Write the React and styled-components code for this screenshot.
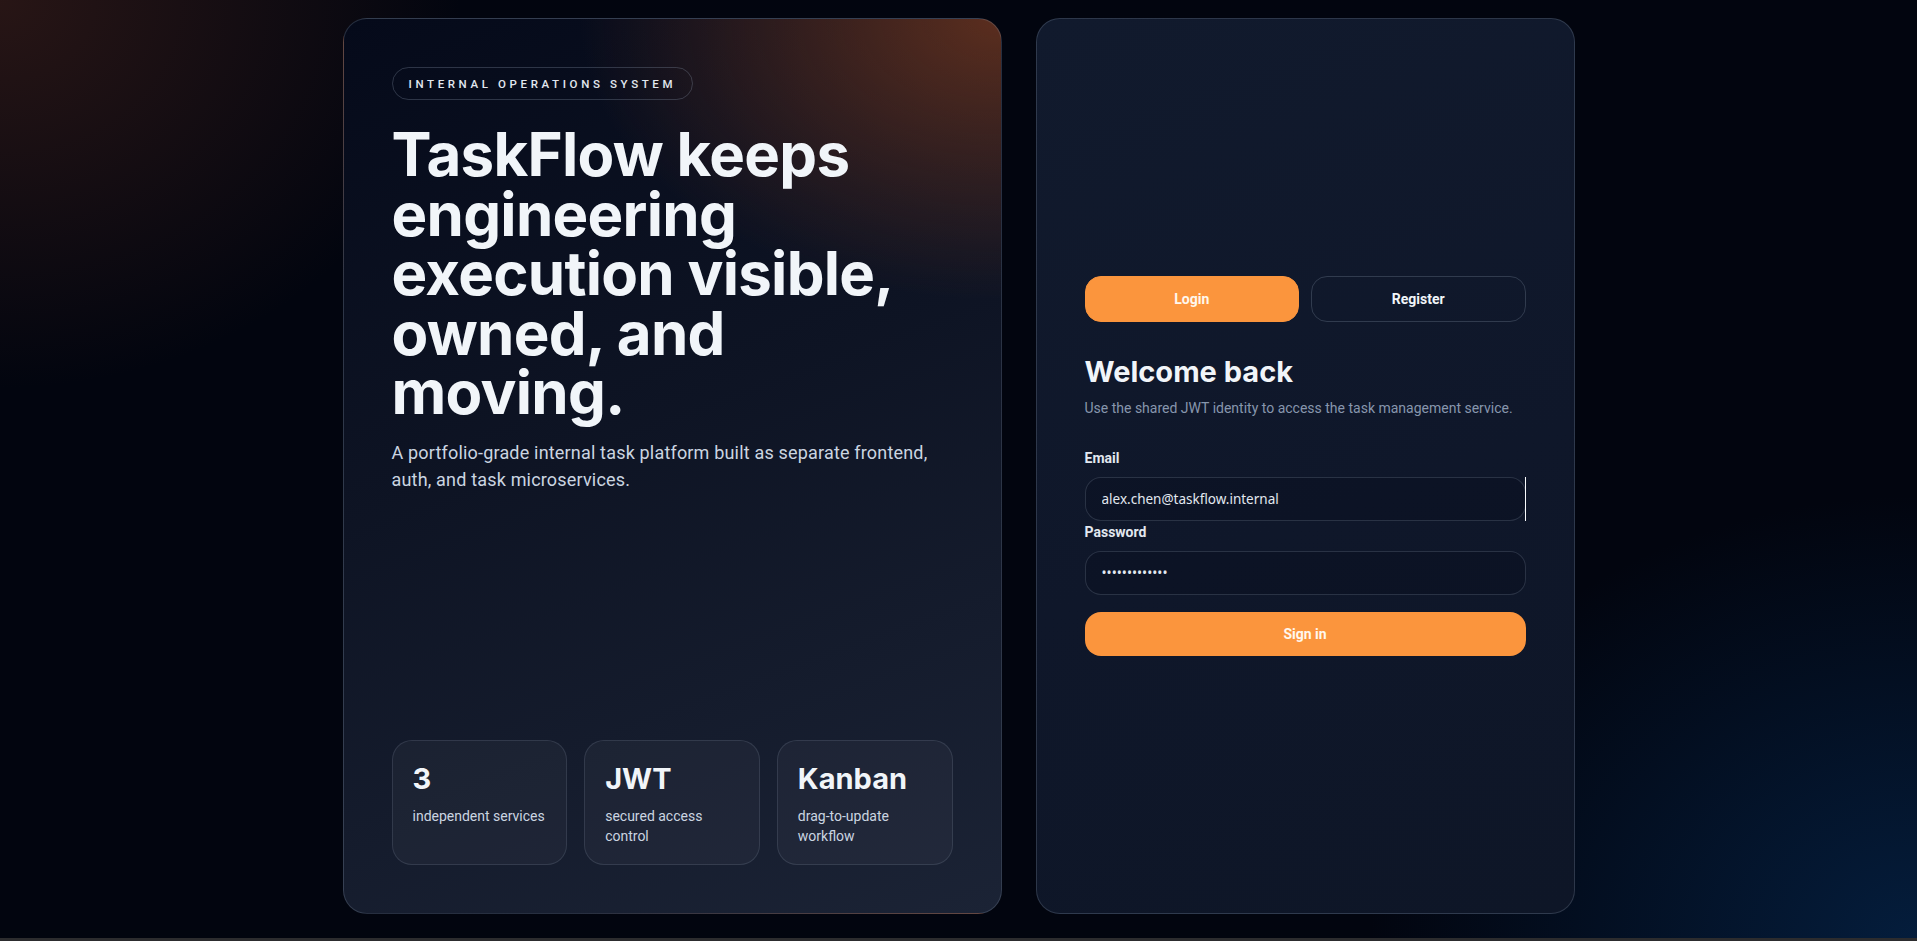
import React from "react";
import styled, { createGlobalStyle } from "styled-components";

const HEADING_FONT = `"Inter", "Liberation Sans", sans-serif`;
const BODY_FONT = `"Roboto", "Liberation Sans", sans-serif`;

const stats = [
  { value: "3", label: "independent services" },
  { value: "JWT", label: "secured access control" },
  { value: "Kanban", label: "drag-to-update workflow" },
];

const GlobalStyle = createGlobalStyle`
  * {
    box-sizing: border-box;
  }

  body {
    margin: 0;
    font-family: ${BODY_FONT};
    color: #f1f5f9;
    background:
      radial-gradient(ellipse 640px 540px at 0% 0%, rgba(92, 44, 30, 0.42), transparent 72%),
      radial-gradient(ellipse 760px 620px at 100% 100%, rgba(6, 44, 88, 0.62), transparent 72%),
      #02050f;
  }
`;

const App = () => {
  return (
    <>
      <GlobalStyle />
      <Page>
        <Shell>
          <Hero>
            <HeroTop>
              <Badge>Internal operations system</Badge>
              <Headline>TaskFlow keeps engineering execution visible, owned, and moving.</Headline>
              <Lead>
                A portfolio-grade internal task platform built as separate frontend, auth, and task
                microservices.
              </Lead>
            </HeroTop>
            <Stats>
              {stats.map((s) => (
                <StatCard key={s.value}>
                  <StatValue>{s.value}</StatValue>
                  <StatLabel>{s.label}</StatLabel>
                </StatCard>
              ))}
            </Stats>
          </Hero>

          <AuthPanel>
            <Tabs>
              <Tab active>Login</Tab>
              <Tab>Register</Tab>
            </Tabs>
            <Title>Welcome back</Title>
            <Subtitle>Use the shared JWT identity to access the task management service.</Subtitle>
            <Form onSubmit={(e) => e.preventDefault()}>
              <Label htmlFor="email">Email</Label>
              <InputWrap caret>
                <Input id="email" type="email" defaultValue="alex.chen@taskflow.internal" />
              </InputWrap>
              <Label htmlFor="password" tight>
                Password
              </Label>
              <InputWrap>
                <Input id="password" type="password" defaultValue="taskflow-2024" />
              </InputWrap>
              <Submit type="submit">Sign in</Submit>
            </Form>
          </AuthPanel>
        </Shell>
      </Page>
    </>
  );
};

const Page = styled.div`
  min-height: 100vh;
  display: flex;
  justify-content: center;
  padding: 18px 24px 24px;
  border-bottom: 4px solid #2c2c2e;
`;

const Shell = styled.div`
  width: 1232px;
  display: grid;
  grid-template-columns: 659px 1fr;
  gap: 34px;
`;

const Card = styled.section`
  min-height: 896px;
  border-radius: 24px;
  border: 1px solid rgba(148, 163, 184, 0.24);
  padding: 48px;
`;

const Hero = styled(Card)`
  display: flex;
  flex-direction: column;
  justify-content: space-between;
  background:
    radial-gradient(ellipse 540px 360px at 100% 0%, rgba(118, 56, 30, 0.75), transparent 78%),
    linear-gradient(160deg, #050a1a 0%, #0e1424 45%, #1b2335 100%);
`;

const HeroTop = styled.div`
  display: flex;
  flex-direction: column;
  align-items: flex-start;
`;

const Badge = styled.span`
  display: inline-flex;
  align-items: center;
  height: 33px;
  padding: 0 16px;
  border-radius: 999px;
  border: 1px solid rgba(148, 163, 184, 0.28);
  font-family: ${BODY_FONT};
  font-size: 11.5px;
  font-weight: 500;
  letter-spacing: 0.315em;
  text-transform: uppercase;
  color: #e2e8f0;
`;

const Headline = styled.h1`
  margin: 25px 0 0;
  font-family: ${HEADING_FONT};
  font-size: 60px;
  font-weight: 700;
  line-height: 59.6px;
  letter-spacing: -0.012em;
  color: #f1f5f9;
  max-width: 540px;
`;

const Lead = styled.p`
  margin: 16px 0 0;
  font-size: 18px;
  line-height: 27px;
  letter-spacing: 0.01em;
  color: #cbd5e1;
  max-width: 570px;
`;

const Stats = styled.div`
  display: grid;
  grid-template-columns: repeat(3, 1fr);
  gap: 17px;
`;

const StatCard = styled.div`
  height: 125px;
  padding: 22px 16px 20px 20px;
  border-radius: 20px;
  border: 1px solid rgba(148, 163, 184, 0.18);
  background: rgba(255, 255, 255, 0.035);
`;

const StatValue = styled.div`
  font-family: ${HEADING_FONT};
  font-size: 29px;
  font-weight: 700;
  line-height: 1.1;
  color: #f1f5f9;
  margin-bottom: 11px;
`;

const StatLabel = styled.div`
  font-size: 14px;
  line-height: 20px;
  color: #cbd5e1;
  max-width: 136px;
`;

const AuthPanel = styled(Card)`
  display: flex;
  flex-direction: column;
  justify-content: center;
  background: linear-gradient(160deg, #111a2d 0%, #0f172a 55%, #0e1627 100%);
`;

const Tabs = styled.div`
  display: grid;
  grid-template-columns: 1fr 1fr;
  gap: 12px;
  margin-bottom: 33px;
`;

const Tab = styled.button`
  height: 46px;
  border-radius: 16px;
  border: 1px solid ${(p) => (p.active ? "#fb953d" : "rgba(148, 163, 184, 0.25)")};
  background: ${(p) => (p.active ? "#fb953d" : "transparent")};
  color: ${(p) => (p.active ? "#fff7ed" : "#f1f5f9")};
  font-family: ${BODY_FONT};
  font-size: 14px;
  font-weight: 700;
  cursor: pointer;
`;

const Title = styled.h2`
  margin: 0;
  font-family: ${HEADING_FONT};
  font-size: 29px;
  font-weight: 700;
  line-height: 1.2;
  color: #f1f5f9;
`;

const Subtitle = styled.p`
  margin: 9px 0 31px;
  font-size: 14px;
  line-height: 20px;
  color: #8796ad;
`;

const Form = styled.form`
  display: flex;
  flex-direction: column;
`;

const Label = styled.label`
  font-size: 14px;
  font-weight: 700;
  line-height: 18px;
  color: #e2e8f0;
  margin-top: ${(p) => (p.tight ? "2px" : "0")};
  margin-bottom: 10px;
`;

const InputWrap = styled.div`
  position: relative;

  &::after {
    content: "";
    display: ${(p) => (p.caret ? "block" : "none")};
    position: absolute;
    right: 0;
    top: 0;
    bottom: 0;
    width: 1px;
    background: #f8fafc;
  }
`;

const Input = styled.input`
  width: 100%;
  height: 44px;
  padding: 0 16px;
  border-radius: 16px;
  border: 1px solid rgba(148, 163, 184, 0.22);
  background: rgba(2, 6, 23, 0.25);
  color: #e2e8f0;
  font-family: "Noto Sans", ${BODY_FONT};
  font-size: 13.5px;
  outline: none;
`;

const Submit = styled.button`
  margin-top: 17px;
  height: 44px;
  border: none;
  border-radius: 16px;
  background: #fb953d;
  color: #fff7ed;
  font-family: ${BODY_FONT};
  font-size: 14px;
  font-weight: 700;
  cursor: pointer;
`;

export default App;
